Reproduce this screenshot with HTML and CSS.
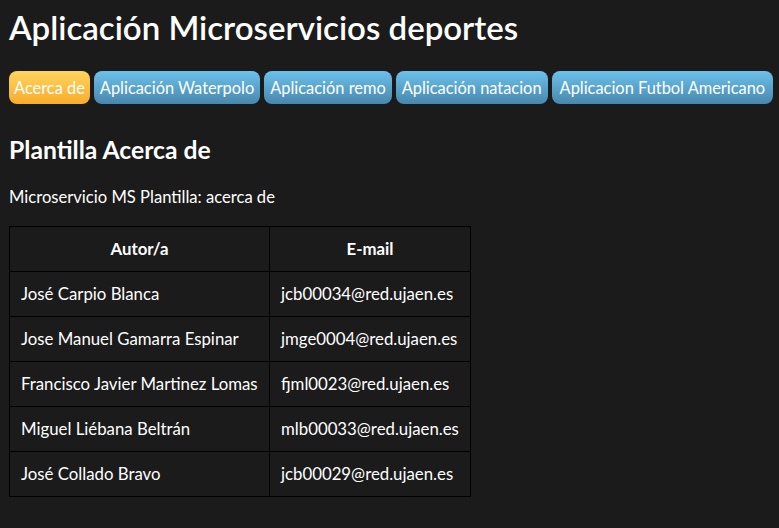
FILE: index.html
```html
<!DOCTYPE html>
<html lang="es">
<head>
<meta charset="utf-8">
<title>Aplicación Microservicios deportes</title>
<link rel="stylesheet" href="styles.css">
</head>
<body>
<h1 class="title">Aplicación Microservicios deportes</h1>
<nav class="tabs">
  <button class="tab tab-active">Acerca de</button>
  <button class="tab">Aplicación Waterpolo</button>
  <button class="tab">Aplicación remo</button>
  <button class="tab">Aplicación natacion</button>
  <button class="tab">Aplicacion Futbol Americano</button>
</nav>
<h2 class="subtitle">Plantilla Acerca de</h2>
<p class="desc">Microservicio MS Plantilla: acerca de</p>
<table class="team">
  <thead>
    <tr><th>Autor/a</th><th>E-mail</th></tr>
  </thead>
  <tbody>
    <tr><td>José Carpio Blanca</td><td>jcb00034@red.ujaen.es</td></tr>
    <tr><td>Jose Manuel Gamarra Espinar</td><td>jmge0004@red.ujaen.es</td></tr>
    <tr><td>Francisco Javier Martinez Lomas</td><td>fjml0023@red.ujaen.es</td></tr>
    <tr><td>Miguel Liébana Beltrán</td><td>mlb00033@red.ujaen.es</td></tr>
    <tr><td>José Collado Bravo</td><td>jcb00029@red.ujaen.es</td></tr>
  </tbody>
</table>
</body>
</html>
```
FILE: styles.css
```css
html, body {
  background: #1b1b1b;
}
body {
  margin: 0;
  padding: 8px 9px;
  color: #ffffff;
  font-family: Lato, "Open Sans", sans-serif;
  font-size: 16.6px;
}
.title {
  margin: 0;
  font-size: 33px;
  font-weight: 600;
  line-height: 38px;
}
.tabs {
  display: flex;
  gap: 4px;
  margin-top: 25px;
  white-space: nowrap;
}
.tab {
  font-family: inherit;
  font-size: 16.4px;
  color: #ffffff;
  border: none;
  border-radius: 8px;
  padding: 0 6px;
  height: 33px;
  background: linear-gradient(#6cc1eb, #4887ad);
  cursor: pointer;
}
.tab-active {
  padding: 0 5px;
  background: linear-gradient(#ffd45e, #f8ac2c);
}
.tab:last-child {
  padding: 0 8px;
}
.subtitle {
  margin: 31px 0 0;
  font-size: 24.7px;
  font-weight: 700;
  line-height: 30px;
}
.desc {
  margin: 22px 0 0;
  line-height: 20px;
}
.team {
  margin-top: 19px;
  border-collapse: collapse;
  font-size: 16.8px;
}
.team th, .team td {
  border: 1px solid #000000;
  height: 44px;
  padding: 0 11px;
  text-align: left;
  line-height: 20px;
}
.team th {
  text-align: center;
  font-weight: 700;
}
.team th:first-child { width: 237px; }
.team th:last-child { width: 178px; }
```
